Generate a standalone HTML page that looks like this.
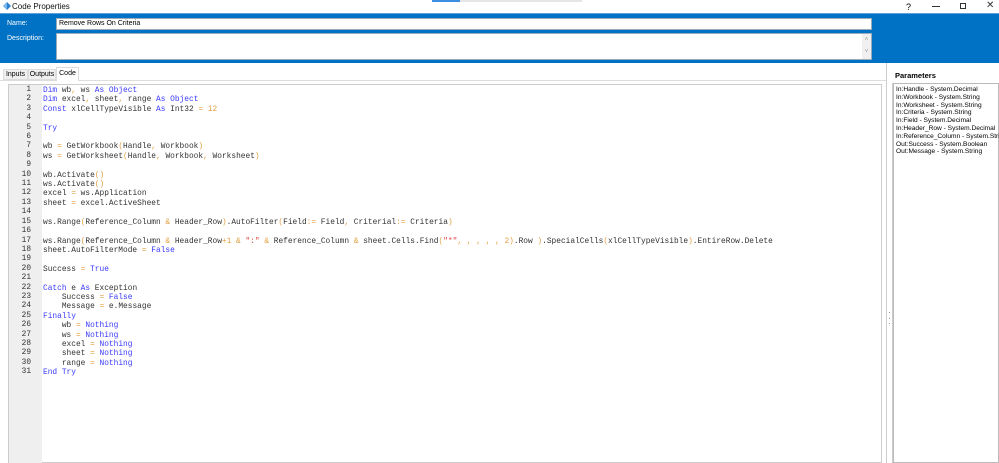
<!DOCTYPE html>
<html><head><meta charset="utf-8"><style>
*{margin:0;padding:0;box-sizing:border-box}
body{width:999px;height:463px;overflow:hidden;background:#fff;font-family:"Liberation Sans",sans-serif;position:relative;font-size:7px;color:#000}
.abs{position:absolute}
.code{font-family:"Liberation Mono",monospace;font-size:7.85px;line-height:9.4px;white-space:pre;color:#333}
.k{color:#3a3aff}.o{color:#e0a040}
.ln{font-family:"Liberation Mono",monospace;font-size:7.8px;line-height:9.4px;text-align:right;color:#333}
</style></head><body>
<div class="abs" style="left:3px;top:2px;width:8px;height:8px;"><svg width="8" height="8"><polygon points="0,4 4,0 8,4 4,8" fill="#2a7fd0"/><polygon points="0,4 4,0 4,8" fill="#7ab8ec"/></svg></div>
<div class="abs" style="left:12px;top:2px;font-size:8px;color:#111">Code Properties</div>
<div class="abs" style="left:432px;top:0;width:150px;height:2px;background:#e6e6e6"></div>
<div class="abs" style="left:432px;top:0;width:28px;height:2px;background:#3c8fe0"></div>
<div class="abs" style="left:906px;top:2px;font-size:9px">?</div>
<div class="abs" style="left:932px;top:6px;width:8px;height:1px;background:#333"></div>
<div class="abs" style="left:960px;top:3px;width:6px;height:6px;border:1px solid #333"></div>
<div class="abs" style="left:986px;top:0px;font-size:10px;color:#333">✕</div>
<div class="abs" style="left:0;top:13px;width:999px;height:50px;background:#0072c6;border-top:1px solid #5aa0dc"></div>
<div class="abs" style="left:7px;top:20px;color:#fff">Name:</div>
<div class="abs" style="left:7px;top:35px;color:#fff">Description:</div>
<div class="abs" style="left:56px;top:18px;width:816px;height:12px;background:#fff;border:1px solid #9ab;padding-left:2px;line-height:10px">Remove Rows On Criteria</div>
<div class="abs" style="left:56px;top:33px;width:816px;height:27px;background:#fff;border:1px solid #9ab"></div>
<div class="abs" style="left:862px;top:34px;width:9px;height:25px;background:#f0f0f0;color:#999;font-size:6px;text-align:center;line-height:12px">˄<br>˅</div>
<div class="abs" style="left:0;top:80px;width:887px;height:1px;background:#ddd"></div>
<div class="abs" style="left:3px;top:69px;width:25px;height:11px;background:#f0f0f0;border:1px solid #ddd;text-align:center;line-height:10px">Inputs</div>
<div class="abs" style="left:28px;top:69px;width:28px;height:11px;background:#f0f0f0;border:1px solid #ddd;text-align:center;line-height:10px">Outputs</div>
<div class="abs" style="left:56px;top:67px;width:23px;height:14px;background:#fff;border:1px solid #ddd;border-bottom:none;text-align:center;line-height:12px">Code</div>
<div class="abs" style="left:8px;top:84px;width:874px;height:379px;border:1px solid #ccc;background:#fff"></div>
<div class="abs" style="left:9px;top:85px;width:33px;height:378px;background:#efefef"></div>
<div class="abs ln" style="left:9px;top:86px;width:22px">1<br>2<br>3<br>4<br>5<br>6<br>7<br>8<br>9<br>10<br>11<br>12<br>13<br>14<br>15<br>16<br>17<br>18<br>19<br>20<br>21<br>22<br>23<br>24<br>25<br>26<br>27<br>28<br>29<br>30<br>31</div>
<div class="abs code" style="left:43px;top:86px"><span class="k">Dim</span> wb<span class="o">,</span> ws <span class="k">As Object</span>
<span class="k">Dim</span> excel<span class="o">,</span> sheet<span class="o">,</span> range <span class="k">As Object</span>
<span class="k">Const</span> xlCellTypeVisible <span class="k">As</span> Int32 <span class="o">=</span> <span class="o">12</span>

<span class="k">Try</span>

wb <span class="o">=</span> GetWorkbook<span class="o">(</span>Handle<span class="o">,</span> Workbook<span class="o">)</span>
ws <span class="o">=</span> GetWorksheet<span class="o">(</span>Handle<span class="o">,</span> Workbook<span class="o">,</span> Worksheet<span class="o">)</span>

wb.Activate<span class="o">()</span>
ws.Activate<span class="o">()</span>
excel <span class="o">=</span> ws.Application
sheet <span class="o">=</span> excel.ActiveSheet

ws.Range<span class="o">(</span>Reference_Column <span class="o">&amp;</span> Header_Row<span class="o">)</span>.AutoFilter<span class="o">(</span>Field<span class="o">:=</span> Field<span class="o">,</span> Criterial<span class="o">:=</span> Criteria<span class="o">)</span>

ws.Range<span class="o">(</span>Reference_Column <span class="o">&amp;</span> Header_Row<span class="o">+1</span> <span class="o">&amp;</span> <span style="color:#e04040">":"</span> <span class="o">&amp;</span> Reference_Column <span class="o">&amp;</span> sheet.Cells.Find<span class="o">(</span><span style="color:#e04040">"*"</span><span class="o">, , , , , 2)</span>.Row <span class="o">)</span>.SpecialCells<span class="o">(</span>xlCellTypeVisible<span class="o">)</span>.EntireRow.Delete
sheet.AutoFilterMode <span class="o">=</span> <span class="k">False</span>

Success <span class="o">=</span> <span class="k">True</span>

<span class="k">Catch</span> e <span class="k">As</span> Exception
    Success <span class="o">=</span> <span class="k">False</span>
    Message <span class="o">=</span> e.Message
<span class="k">Finally</span>
    wb <span class="o">=</span> <span class="k">Nothing</span>
    ws <span class="o">=</span> <span class="k">Nothing</span>
    excel <span class="o">=</span> <span class="k">Nothing</span>
    sheet <span class="o">=</span> <span class="k">Nothing</span>
    range <span class="o">=</span> <span class="k">Nothing</span>
<span class="k">End Try</span></div>
<div class="abs" style="left:886px;top:63px;width:1px;height:400px;background:#ccc"></div>
<div class="abs" style="left:892px;top:83px;width:1px;height:380px;background:#ccc"></div>
<div class="abs" style="left:889px;top:312px;width:1px;height:1px;background:#999"></div>
<div class="abs" style="left:889px;top:318px;width:1px;height:1px;background:#999"></div>
<div class="abs" style="left:889px;top:323px;width:1px;height:1px;background:#999"></div>
<div class="abs" style="left:895px;top:71px;font-weight:bold;font-size:7.5px">Parameters</div>
<div class="abs" style="left:893px;top:83px;width:106px;height:380px;border:1px solid #bbb;background:#fff;padding:2px 0 0 2px;font-size:6.6px;line-height:7.8px;white-space:nowrap">In:Handle - System.Decimal<br>In:Workbook - System.String<br>In:Worksheet - System.String<br>In:Criteria - System.String<br>In:Field - System.Decimal<br>In:Header_Row - System.Decimal<br>In:Reference_Column - System.String<br>Out:Success - System.Boolean<br>Out:Message - System.String</div>
</body></html>
